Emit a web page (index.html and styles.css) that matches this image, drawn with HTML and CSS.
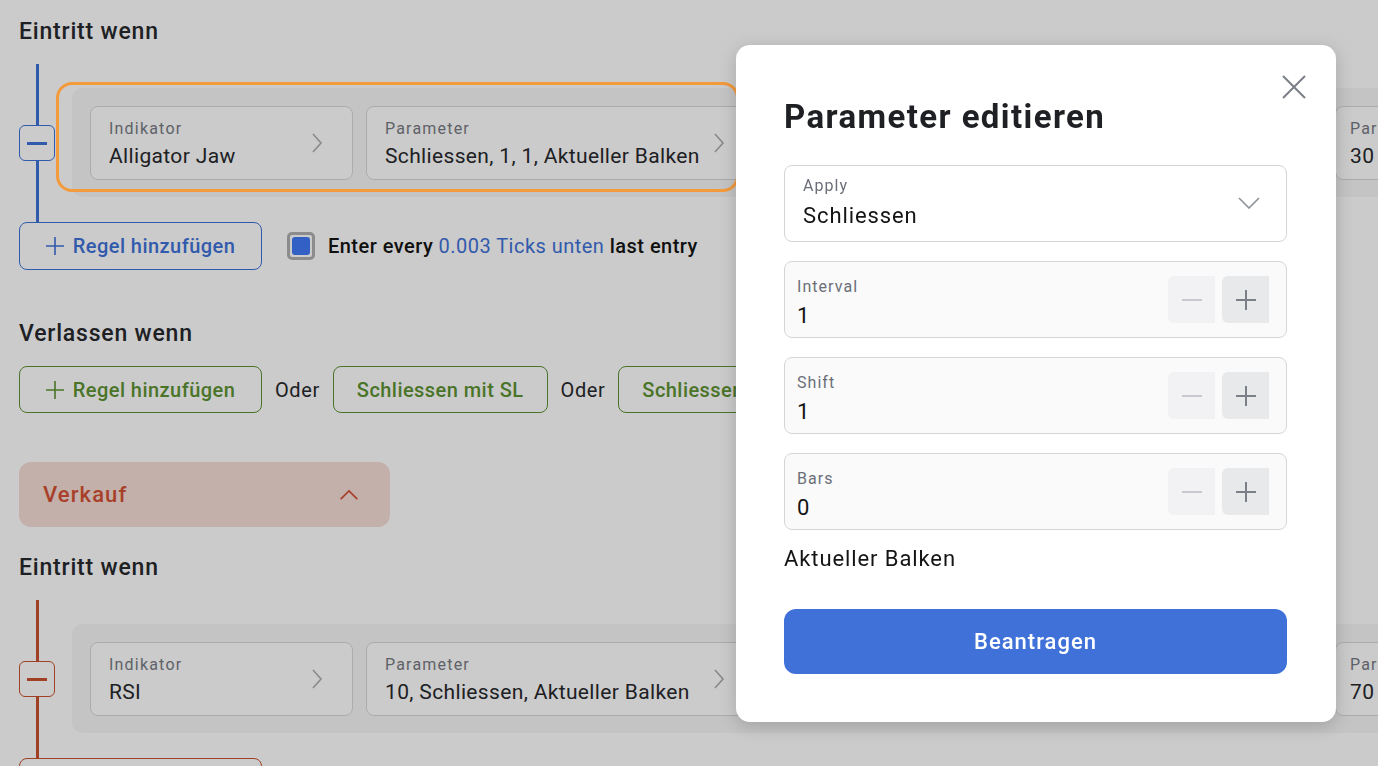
FILE: index.html
```html
<!DOCTYPE html>
<html lang="de">
<head>
<meta charset="utf-8">
<title>Parameter editieren</title>
<link rel="stylesheet" href="styles.css">
</head>
<body>
<main class="page">
  <h2 class="section-title">Eintritt wenn</h2>
  <div class="rule-block blue">
    <div class="rail"><span class="line"></span><button class="minus"><span></span></button><span class="line"></span></div>
    <div class="rule">
      <div class="card w-ind"><div class="txt"><div class="lbl">Indikator</div><div class="val">Alligator Jaw</div></div><svg class="chev" viewBox="0 0 12 24"><path d="M2 3l8 9-8 9"/></svg></div>
      <div class="card w-par"><div class="txt"><div class="lbl">Parameter</div><div class="val">Schliessen, 1, 1, Aktueller Balken</div></div><svg class="chev" viewBox="0 0 12 24"><path d="M2 3l8 9-8 9"/></svg></div>
      <div class="card w-cmp"><div class="txt"><div class="lbl">Bedingung</div><div class="val">Kreuzt über</div></div></div>
      <div class="card w-last"><div class="txt"><div class="lbl">Parameter</div><div class="val">30</div></div></div>
    </div>
  </div>
  <div class="row">
    <button class="outline blue-btn"><svg class="plus" viewBox="0 0 18 18"><path d="M9 0v18M0 9h18"/></svg>Regel hinzufügen</button>
    <span class="check"><span></span></span>
    <span class="enter">Enter every <span class="link">0.003 Ticks unten</span> last entry</span>
  </div>

  <h2 class="section-title exit-title">Verlassen wenn</h2>
  <div class="row exit-row">
    <button class="outline green-btn"><svg class="plus" viewBox="0 0 18 18"><path d="M9 0v18M0 9h18"/></svg>Regel hinzufügen</button>
    <span class="oder">Oder</span>
    <button class="outline green-btn">Schliessen mit SL</button>
    <span class="oder">Oder</span>
    <button class="outline green-btn">Schliessen mit TP</button>
  </div>

  <div class="sell">
    <span>Verkauf</span>
    <svg viewBox="0 0 24 14"><path d="M2 12l10-10 10 10"/></svg>
  </div>

  <h2 class="section-title sell-title">Eintritt wenn</h2>
  <div class="rule-block red">
    <div class="rail"><span class="line"></span><button class="minus"><span></span></button><span class="line"></span></div>
    <div class="rule">
      <div class="card w-ind"><div class="txt"><div class="lbl">Indikator</div><div class="val">RSI</div></div><svg class="chev" viewBox="0 0 12 24"><path d="M2 3l8 9-8 9"/></svg></div>
      <div class="card w-par"><div class="txt"><div class="lbl">Parameter</div><div class="val">10, Schliessen, Aktueller Balken</div></div><svg class="chev" viewBox="0 0 12 24"><path d="M2 3l8 9-8 9"/></svg></div>
      <div class="card w-cmp"><div class="txt"><div class="lbl">Bedingung</div><div class="val">Größer als</div></div></div>
      <div class="card w-last"><div class="txt"><div class="lbl">Parameter</div><div class="val">70</div></div></div>
    </div>
  </div>
  <div class="row">
    <button class="outline red-btn"><svg class="plus" viewBox="0 0 18 18"><path d="M9 0v18M0 9h18"/></svg>Regel hinzufügen</button>
  </div>
</main>

<div class="backdrop"></div>
<div class="highlight"></div>

<section class="modal">
  <svg class="close" viewBox="0 0 24 24"><path d="M1 1l22 22M23 1L1 23"/></svg>
  <h1 class="modal-title">Parameter editieren</h1>

  <div class="field select">
    <div class="txt"><div class="flbl">Apply</div><div class="fval">Schliessen</div></div>
    <svg class="down" viewBox="0 0 22 12"><path d="M1 1l10 10 10-10"/></svg>
  </div>

  <div class="field num">
    <div class="txt"><div class="flbl">Interval</div><div class="fval">1</div></div>
    <div class="steps"><button class="step dec"><svg viewBox="0 0 20 20"><path d="M0 10h20"/></svg></button><button class="step inc"><svg viewBox="0 0 20 20"><path d="M10 0v20M0 10h20"/></svg></button></div>
  </div>

  <div class="field num">
    <div class="txt"><div class="flbl">Shift</div><div class="fval">1</div></div>
    <div class="steps"><button class="step dec"><svg viewBox="0 0 20 20"><path d="M0 10h20"/></svg></button><button class="step inc"><svg viewBox="0 0 20 20"><path d="M10 0v20M0 10h20"/></svg></button></div>
  </div>

  <div class="field num">
    <div class="txt"><div class="flbl">Bars</div><div class="fval">0</div></div>
    <div class="steps"><button class="step dec"><svg viewBox="0 0 20 20"><path d="M0 10h20"/></svg></button><button class="step inc"><svg viewBox="0 0 20 20"><path d="M10 0v20M0 10h20"/></svg></button></div>
  </div>

  <p class="current">Aktueller Balken</p>

  <button class="apply">Beantragen</button>
</section>
</body>
</html>
```

FILE: styles.css
```css
* { box-sizing: border-box; }
html, body { margin: 0; padding: 0; }
body {
  width: 1378px;
  height: 766px;
  overflow: hidden;
  background: #fefefe;
  font-family: Roboto, "Liberation Sans", sans-serif;
  color: #27282c;
}
button { font-family: inherit; cursor: pointer; }

.page { padding: 17px 0 0 19px; }

.section-title {
  margin: 0;
  font-size: 23px;
  line-height: 30px;
  font-weight: 500;
  letter-spacing: 0.8px;
  color: #27282c;
}
.exit-title { margin-top: 49px; }
.sell-title { margin-top: 26px; }

.rule-block {
  display: flex;
  margin-top: 17px;
  height: 158px;
}
.rail {
  width: 36px;
  display: flex;
  flex-direction: column;
  align-items: center;
  flex: none;
}
.rail .line { flex: 1; width: 3px; }
.rule-block.blue .line { background: #3f71d8; }
.rule-block.red .line { background: #c8512f; }
.minus {
  width: 36px;
  height: 36px;
  padding: 0;
  border-radius: 6px;
  background: #fefefe;
  display: flex;
  align-items: center;
  justify-content: center;
  flex: none;
}
.minus span { width: 20px; height: 3px; display: block; }
.blue .minus { border: 1px solid #3f71d8; }
.blue .minus span { background: #3f71d8; }
.red .minus { border: 1px solid #c8512f; }
.red .minus span { background: #c8512f; }

.rule {
  margin: 24px 0 25px 17px;
  background: #f5f5f5;
  border-radius: 10px;
  padding: 18px 18px;
  display: flex;
  gap: 13px;
  flex: none;
  width: 1400px;
}
.card {
  height: 74px;
  border: 1px solid #d8d8d8;
  border-radius: 8px;
  background: #fefefe;
  display: flex;
  align-items: center;
  padding: 0 29px 0 18px;
  flex: none;
}
.card .txt { flex: 1; min-width: 0; white-space: nowrap; overflow: hidden; padding-top: 2px; }
.w-ind { width: 263px; }
.w-par { width: 389px; }
.w-cmp { width: 554px; }
.w-last { width: 300px; padding-left: 14px; }
.lbl { font-size: 16px; line-height: 20px; letter-spacing: 1.2px; color: #777a83; }
.val { font-size: 21px; line-height: 28px; letter-spacing: 0.35px; color: #27282c; margin-top: 3px; }
.chev { width: 12px; height: 24px; fill: none; stroke: #acacac; stroke-width: 1.6; flex: none; }

.row {
  display: flex;
  align-items: center;
  height: 48px;
}
.outline {
  height: 48px;
  background: #fefefe;
  border-radius: 8px;
  font-size: 20px;
  font-weight: 500;
  letter-spacing: 0.45px;
  display: flex;
  align-items: center;
  justify-content: center;
  padding: 0 23px;
}
.plus { width: 18px; height: 18px; fill: none; stroke-width: 1.6; margin: 0 9px 0 0; flex: none; }
.blue-btn { border: 1px solid #3f71d8; color: #3f71d8; width: 243px; }
.blue-btn .plus { stroke: #3f71d8; }
.green-btn { border: 1px solid #5d9233; color: #5d9233; height: 47px; }
.green-btn .plus { stroke: #5d9233; }
.red-btn { border: 1px solid #c8512f; color: #c8512f; width: 243px; }
.red-btn .plus { stroke: #c8512f; }

.check {
  width: 28px;
  height: 28px;
  border: 3px solid #b0b0b0;
  border-radius: 5px;
  margin-left: 25px;
  display: flex;
  align-items: center;
  justify-content: center;
  background: #fefefe;
}
.check span { width: 18px; height: 18px; border-radius: 3px; background: #3f78f5; display: block; }
.enter { margin-left: 13px; font-size: 20px; font-weight: 500; letter-spacing: 0.47px; color: #141414; }
.link { color: #3f71d8; font-weight: 400; }

.exit-row { margin-top: 17px; height: 47px; gap: 13px; }
.exit-row .green-btn:first-child { width: 243px; }
.oder { font-size: 20px; letter-spacing: 0.6px; color: #27282c; }

.sell {
  margin-top: 49px;
  width: 371px;
  height: 65px;
  background: #f5dcd5;
  border-radius: 12px;
  display: flex;
  align-items: center;
  justify-content: space-between;
  padding: 0 31px 0 24px;
  font-size: 22px;
  font-weight: 500;
  letter-spacing: 1.1px;
  color: #d25034;
}
.sell svg { width: 20px; height: 12px; fill: none; stroke: #d25034; stroke-width: 2; }

.backdrop {
  position: fixed;
  inset: 0;
  background: rgba(0, 0, 0, 0.2);
}
.highlight {
  position: absolute;
  left: 56px;
  top: 82px;
  width: 683px;
  height: 110px;
  border: 3px solid #f39a3a;
  border-radius: 16px;
}

.modal {
  position: absolute;
  left: 736px;
  top: 45px;
  width: 600px;
  height: 677px;
  background: #ffffff;
  border-radius: 14px;
  box-shadow: 0 4px 18px rgba(0, 0, 0, 0.18);
  padding: 50px 49px 48px 48px;
  display: flex;
  flex-direction: column;
}
.close {
  position: absolute;
  right: 30px;
  top: 30px;
  width: 24px;
  height: 24px;
  fill: none;
  stroke: #7b7f88;
  stroke-width: 2;
}
.modal-title {
  margin: 0;
  font-size: 33px;
  line-height: 44px;
  font-weight: 700;
  letter-spacing: 1.4px;
  color: #1f2023;
}
.field {
  height: 77px;
  border: 1px solid #d3d5d9;
  border-radius: 8px;
  display: flex;
  align-items: center;
}
.field .txt { flex: 1; }
.select { margin-top: 26px; padding: 0 26px 2px 18px; }
.flbl { font-size: 16px; line-height: 20px; letter-spacing: 1.05px; color: #6b6f78; }
.fval { font-size: 22px; line-height: 28px; letter-spacing: 0.9px; color: #141414; margin-top: 6px; }
.down { width: 22px; height: 12px; fill: none; stroke: #8c9098; stroke-width: 1.6; }
.num { margin-top: 19px; background: #fafafa; padding: 0 17px 0 12px; }
.num .txt { padding-top: 7px; }
.num .fval { margin-top: 5px; }
.steps { display: flex; gap: 7px; }
.step {
  width: 47px;
  height: 47px;
  border: none;
  border-radius: 6px 0 0 6px;
  display: flex;
  align-items: center;
  justify-content: center;
  padding: 0;
}
.step svg { width: 20px; height: 20px; fill: none; stroke-width: 2; }
.dec { background: #f2f2f4; }
.dec svg { stroke: #c7c9ce; }
.inc { background: #e8e9eb; }
.inc svg { stroke: #7b7f88; }
.current {
  margin: 15px 0 0;
  font-size: 22px;
  line-height: 28px;
  letter-spacing: 0.9px;
  color: #141414;
}
.apply {
  margin-top: 36px;
  height: 65px;
  border: none;
  border-radius: 12px;
  background: #3f71d8;
  color: #ffffff;
  font-size: 22px;
  font-weight: 500;
  letter-spacing: 1px;
}
```
